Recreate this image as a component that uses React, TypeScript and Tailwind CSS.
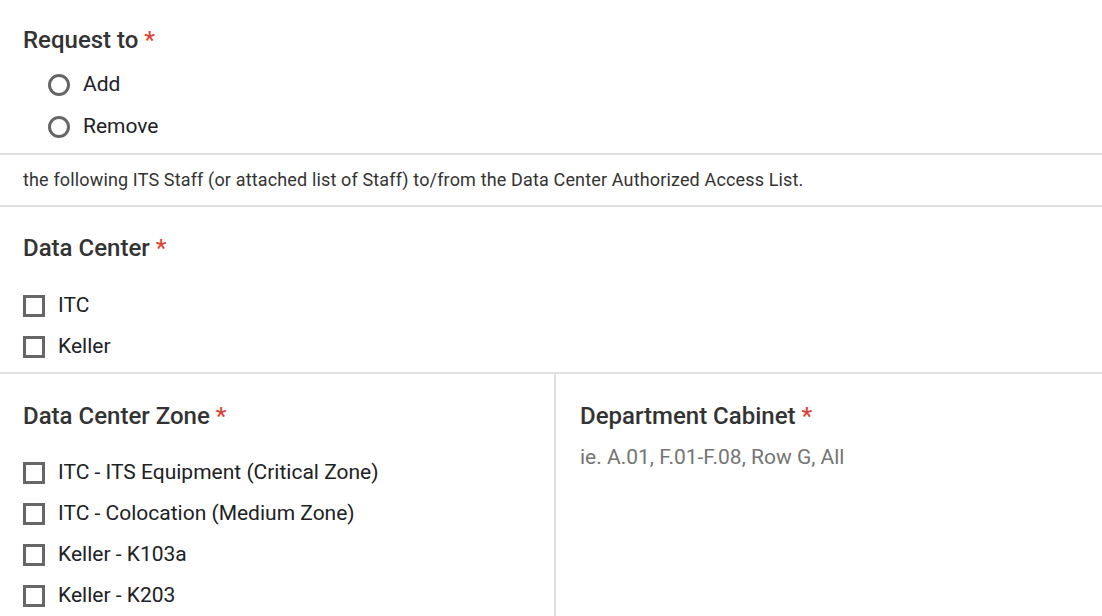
const font = { fontFamily: "Roboto, 'Noto Sans', sans-serif" };

function Heading({ children }: { children: React.ReactNode }) {
  return (
    <h2 className="text-[24px] leading-[28px] font-medium text-[#333333]">
      {children} <span className="text-[#db4437]">*</span>
    </h2>
  );
}

function Radio({ label }: { label: string }) {
  return (
    <label className="flex h-[42px] items-center gap-[13px] pl-[25px]">
      <span className="h-[22px] w-[22px] rounded-full border-[3px] border-[#666666]" />
      <span className="text-[21px] text-[#202124]">{label}</span>
    </label>
  );
}

function Check({ label }: { label: string }) {
  return (
    <label className="flex h-[41px] items-center gap-[13px]">
      <span className="h-[22px] w-[22px] border-[3px] border-[#666666]" />
      <span className="text-[21px] text-[#202124]">{label}</span>
    </label>
  );
}

export default function App() {
  return (
    <div className="h-[616px] w-[1102px] overflow-hidden bg-white" style={font}>
      <section className="h-[155px] border-b-2 border-[#e0e0e0] px-[23px] pt-[26px]">
        <Heading>Request to</Heading>
        <div className="mt-[10px]">
          <Radio label="Add" />
          <Radio label="Remove" />
        </div>
      </section>

      <section className="flex h-[52px] items-center border-b-2 border-[#e0e0e0] px-[23px] pb-[2px]">
        <p className="text-[18px] tracking-[0.15px] text-[#333333]">
          the following ITS Staff (or attached list of Staff) to/from the Data Center Authorized Access List.
        </p>
      </section>

      <section className="h-[167px] border-b-2 border-[#e0e0e0] px-[23px] pt-[27px]">
        <Heading>Data Center</Heading>
        <div className="mt-[23px]">
          <Check label="ITC" />
          <Check label="Keller" />
        </div>
      </section>

      <section className="grid grid-cols-[556px_1fr]">
        <div className="border-r-2 border-[#e0e0e0] px-[23px] pt-[28px] pb-[20px]">
          <Heading>Data Center Zone</Heading>
          <div className="mt-[22px]">
            <Check label="ITC - ITS Equipment (Critical Zone)" />
            <Check label="ITC - Colocation (Medium Zone)" />
            <Check label="Keller - K103a" />
            <Check label="Keller - K203" />
          </div>
        </div>
        <div className="px-[24px] pt-[28px]">
          <Heading>Department Cabinet</Heading>
          <p className="mt-[13px] text-[21px] leading-[28px] text-[#757575]">ie. A.01, F.01-F.08, Row G, All</p>
        </div>
      </section>
    </div>
  );
}
